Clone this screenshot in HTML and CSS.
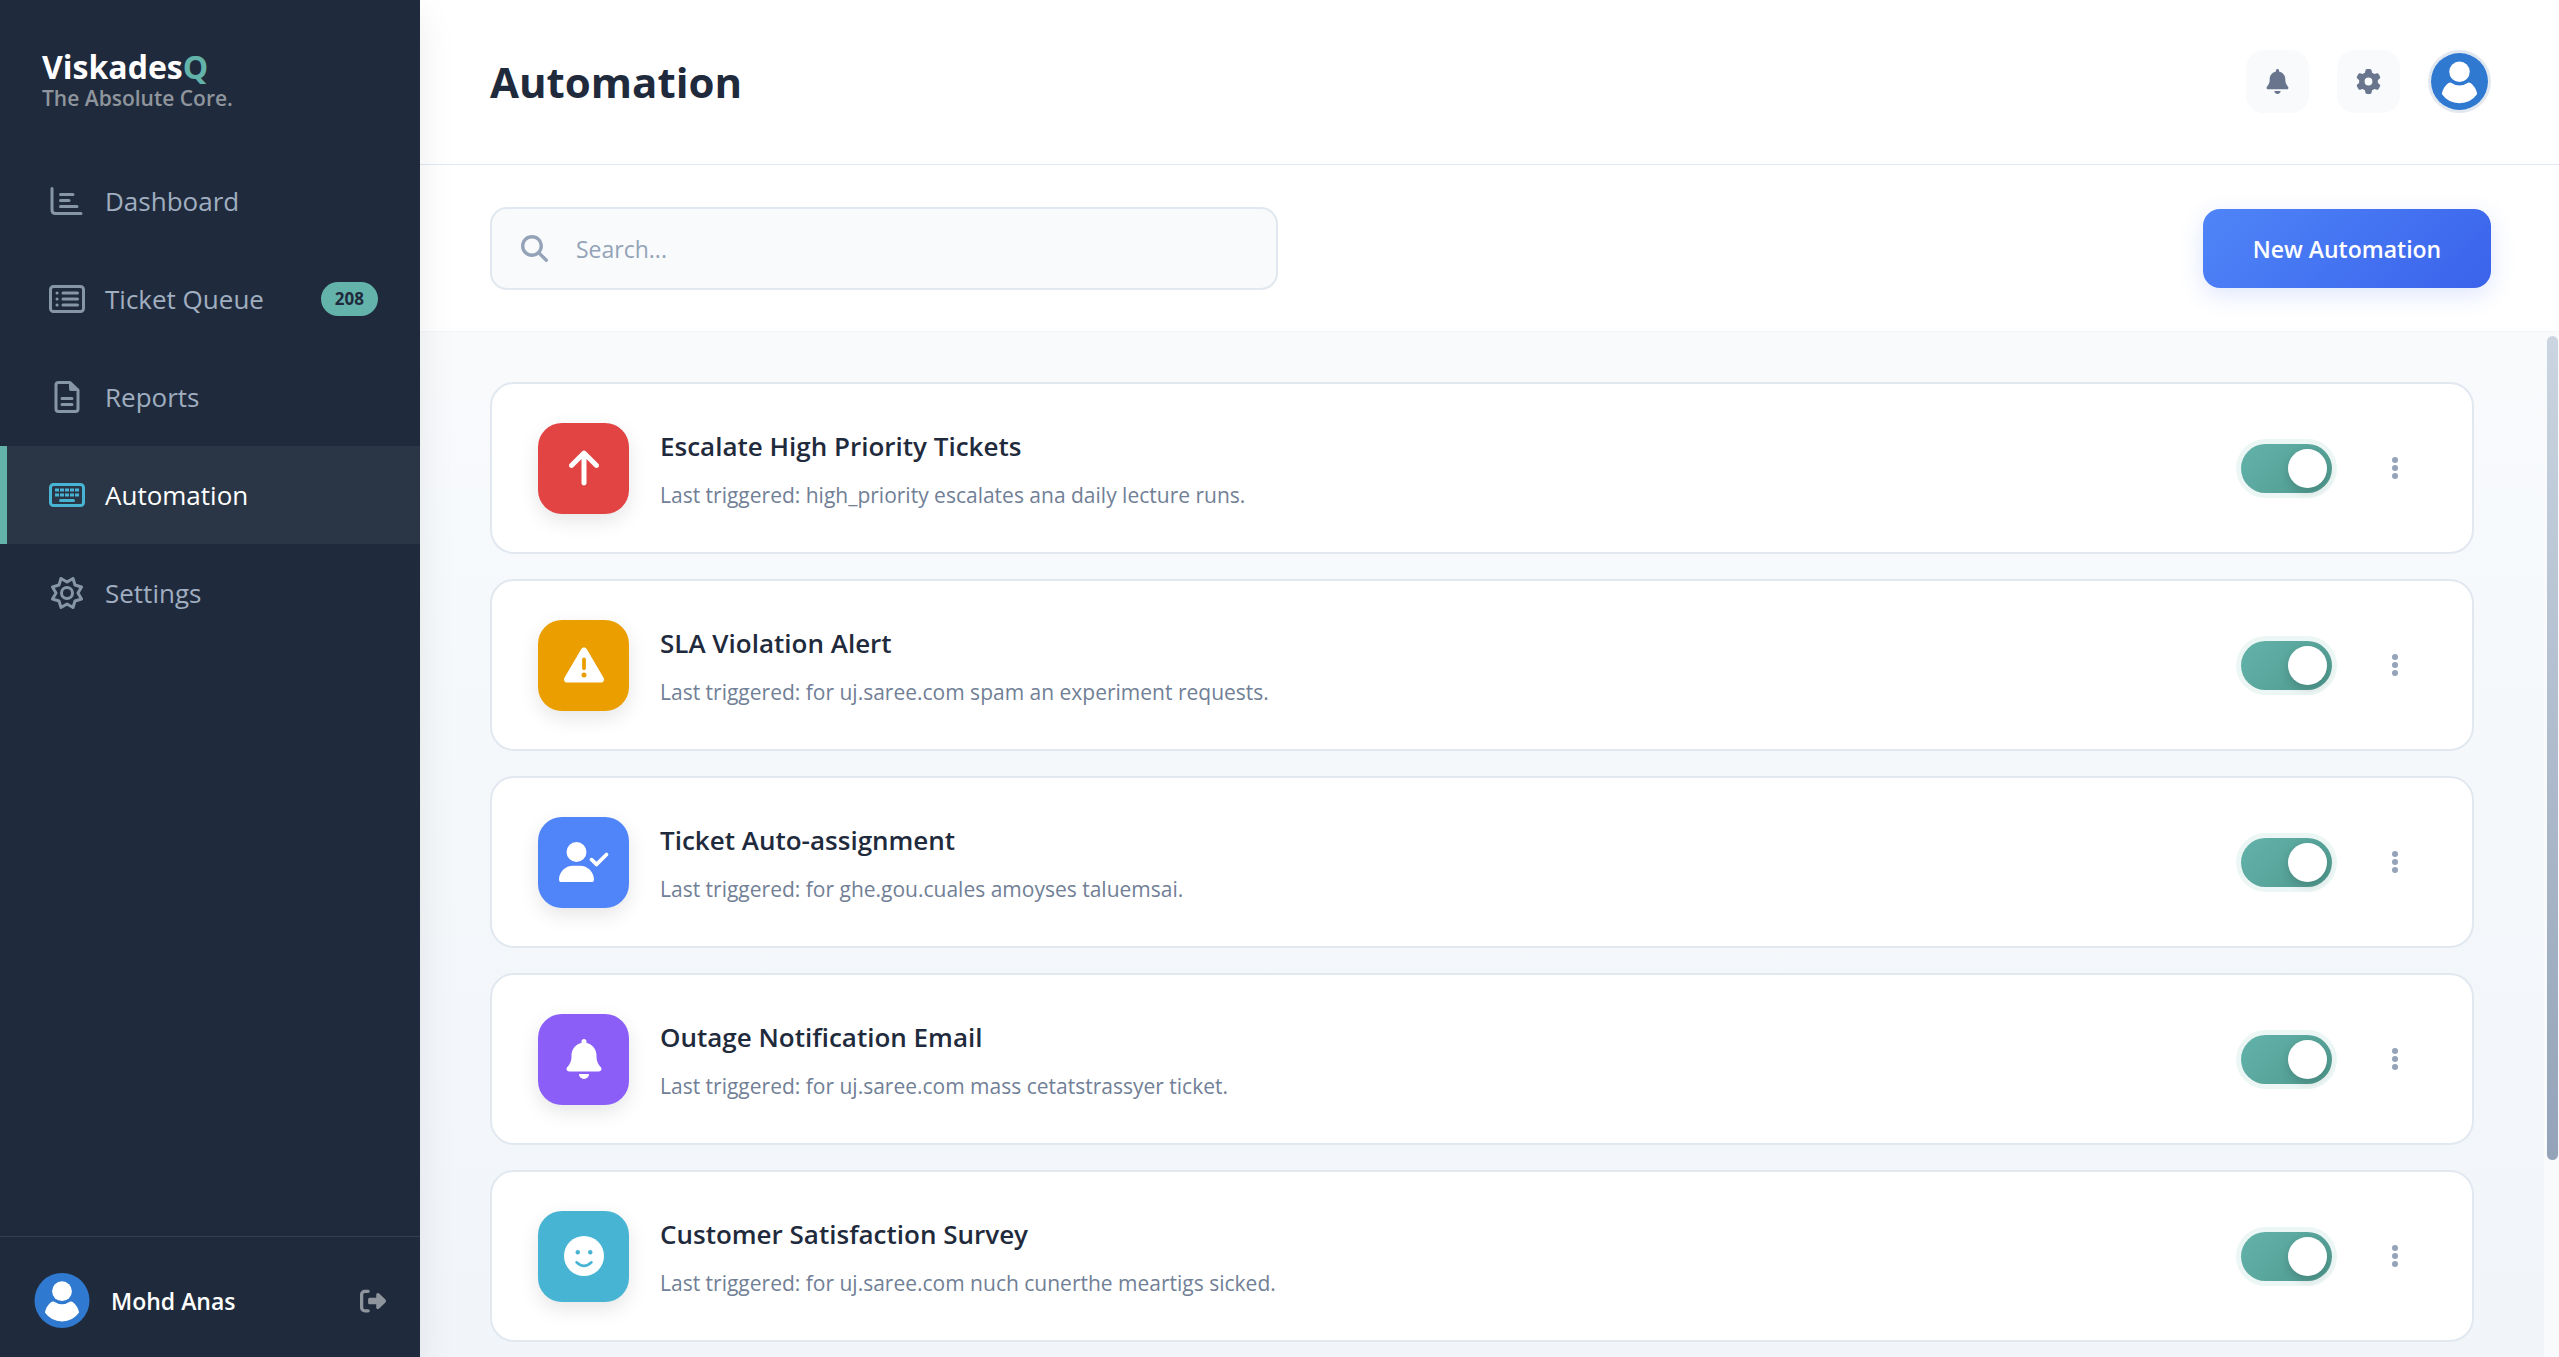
FILE: index.html
```
<!DOCTYPE html>
<html lang="en">
<head>
    <meta charset="UTF-8">
    <meta name="viewport" content="width=device-width, initial-scale=1.0">
    <title>Automation - ViskadesQ</title>
    <link rel="stylesheet" href="styles.css">
</head>
<body>
    <!-- Shared icons -->
    <svg class="sprite" aria-hidden="true">
        <symbol id="icon-bell" viewBox="0 0 448 512">
            <path d="M224 0c-17.7 0-32 14.3-32 32V51.2C119 66 64 130.6 64 208v18.8c0 47-17.3 92.4-48.5 127.6l-7.4 8.3c-8.4 9.4-10.4 22.9-5.3 34.4S19.4 416 32 416H416c12.6 0 24-7.4 29.2-18.9s3.1-25-5.3-34.4l-7.4-8.3C401.3 319.2 384 273.9 384 226.8V208c0-77.4-55-142-128-156.8V32c0-17.7-14.3-32-32-32zm45.3 493.3c12-12 18.7-28.3 18.7-45.3H224 160c0 17 6.7 33.3 18.7 45.3s28.3 18.7 45.3 18.7s33.3-6.7 45.3-18.7z"/>
        </symbol>
        <symbol id="icon-dots" viewBox="0 0 6 22">
            <circle cx="3" cy="3" r="3"/>
            <circle cx="3" cy="11" r="3"/>
            <circle cx="3" cy="19" r="3"/>
        </symbol>
        <symbol id="icon-avatar" viewBox="0 0 100 100">
            <circle cx="50" cy="50" r="50" fill="#3079d0"/>
            <circle cx="50" cy="33" r="18" fill="#fff"/>
            <path fill="#fff" d="M35 52Q50 62 65 52Q67 51 70 53Q79 60 81 72Q70 88 50 88Q30 88 19 72Q21 60 30 53Q33 51 35 52z"/>
        </symbol>
    </svg>

    <div class="app">
        <aside class="sidebar">
            <div class="brand">
                <div class="brand-name">Viskades<span>Q</span></div>
                <div class="brand-tagline">The Absolute Core.</div>
            </div>

            <nav class="nav">
                <a href="#" class="nav-item">
                    <svg class="nav-icon" viewBox="0 0 36 32">
                        <path d="M3 3.5V25q0 3.5 3.5 3.5H32M11.5 9.5h12.5M11.5 15.5h8.5M11.5 21.5h16.5"/>
                    </svg>
                    <span>Dashboard</span>
                </a>
                <a href="#" class="nav-item">
                    <svg class="nav-icon" viewBox="0 0 36 32">
                        <rect x="1.5" y="3.5" width="33" height="25" rx="3"/>
                        <path d="M14 10h14.5M14 16h14.5M14 22h14.5M8 10h.1M8 16h.1M8 22h.1"/>
                    </svg>
                    <span>Ticket Queue</span>
                    <span class="badge">208</span>
                </a>
                <a href="#" class="nav-item">
                    <svg class="nav-icon" viewBox="0 0 36 32">
                        <path d="M21 1.5H9.5q-2.5 0-2.5 2.5v24q0 2.5 2.5 2.5h17q2.5 0 2.5-2.5V9zM13 17.5h10M13 23.5h10"/>
                        <path class="solid" d="M20 1h2l8 8v1h-8q-2 0-2-2z"/>
                    </svg>
                    <span>Reports</span>
                </a>
                <a href="#" class="nav-item active">
                    <svg class="nav-icon" viewBox="0 0 36 32">
                        <rect x="1.5" y="5.5" width="33" height="21" rx="3"/>
                        <path d="M11.5 21.5h13"/>
                        <path class="solid" d="M6 9.5h4v3h-4zM11 9.5h4v3h-4zM16 9.5h4v3h-4zM21 9.5h4v3h-4zM26 9.5h4v3h-4zM6 14.5h4v3h-4zM11 14.5h4v3h-4zM16 14.5h4v3h-4zM21 14.5h4v3h-4zM26 14.5h4v3h-4z"/>
                    </svg>
                    <span>Automation</span>
                </a>
                <a href="#" class="nav-item">
                    <svg class="nav-icon" viewBox="0 0 36 32">
                        <path d="M24 1.5L26 8L32.5 10L29 16L32.5 22L26 24L24 30.5L18 27L12 30.5L10 24L3.5 22L7 16L3.5 10L10 8L12 1.5L18 5z"/>
                        <circle cx="18" cy="16" r="5.5"/>
                    </svg>
                    <span>Settings</span>
                </a>
            </nav>

            <div class="user">
                <svg class="user-avatar"><use href="#icon-avatar"/></svg>
                <span class="user-name">Mohd Anas</span>
                <button class="logout" aria-label="Log out">
                    <svg viewBox="0 0 512 512"><path d="M377.9 105.9L500.7 228.7c7.2 7.2 11.3 17.1 11.3 27.3s-4.1 20.1-11.3 27.3L377.9 406.1c-6.4 6.4-15 9.9-24 9.9c-18.7 0-33.9-15.2-33.9-33.9l0-62.1-128 0c-17.7 0-32-14.3-32-32l0-64c0-17.7 14.3-32 32-32l128 0 0-62.1c0-18.7 15.2-33.9 33.9-33.9c9 0 17.6 3.6 24 9.9zM160 96L96 96c-17.7 0-32 14.3-32 32l0 256c0 17.7 14.3 32 32 32l64 0c17.7 0 32 14.3 32 32s-14.3 32-32 32l-64 0c-53 0-96-43-96-96L0 128C0 75 43 32 96 32l64 0c17.7 0 32 14.3 32 32s-14.3 32-32 32z"/></svg>
                </button>
            </div>
        </aside>

        <main class="main">
            <header class="header">
                <h1>Automation</h1>
                <div class="header-actions">
                    <button class="icon-btn" aria-label="Notifications">
                        <svg><use href="#icon-bell"/></svg>
                    </button>
                    <button class="icon-btn" aria-label="Settings">
                        <svg viewBox="0 0 512 512"><path d="M495.9 166.6c3.2 8.7 .5 18.4-6.4 24.6l-43.3 39.4c1.1 8.3 1.7 16.8 1.7 25.4s-.6 17.1-1.7 25.4l43.3 39.4c6.9 6.2 9.6 15.9 6.4 24.6c-4.4 11.9-9.7 23.3-15.8 34.3l-4.7 8.1c-6.6 11-14 21.4-22.1 31.2c-5.9 7.2-15.7 9.6-24.5 6.8l-55.7-17.7c-13.4 10.3-28.2 18.9-44 25.4l-12.5 57.1c-2 9.1-9 16.3-18.2 17.8c-13.8 2.3-28 3.5-42.5 3.5s-28.7-1.2-42.5-3.5c-9.2-1.5-16.2-8.7-18.2-17.8l-12.5-57.1c-15.8-6.5-30.6-15.1-44-25.4L83.1 425.9c-8.8 2.8-18.6 .3-24.5-6.8c-8.1-9.8-15.5-20.2-22.1-31.2l-4.7-8.1c-6.1-11-11.4-22.4-15.8-34.3c-3.2-8.7-.5-18.4 6.4-24.6l43.3-39.4C64.6 273.1 64 264.6 64 256s.6-17.1 1.7-25.4L22.4 191.2c-6.9-6.2-9.6-15.9-6.4-24.6c4.4-11.9 9.7-23.3 15.8-34.3l4.7-8.1c6.6-11 14-21.4 22.1-31.2c5.9-7.2 15.7-9.6 24.5-6.8l55.7 17.7c13.4-10.3 28.2-18.9 44-25.4l12.5-57.1c2-9.1 9-16.3 18.2-17.8C227.3 1.2 241.5 0 256 0s28.7 1.2 42.5 3.5c9.2 1.5 16.2 8.7 18.2 17.8l12.5 57.1c15.8 6.5 30.6 15.1 44 25.4l55.7-17.7c8.8-2.8 18.6-.3 24.5 6.8c8.1 9.8 15.5 20.2 22.1 31.2l4.7 8.1c6.1 11 11.4 22.4 15.8 34.3zM256 336a80 80 0 1 0 0-160 80 80 0 1 0 0 160z"/></svg>
                    </button>
                    <button class="profile-btn" aria-label="Profile">
                        <svg><use href="#icon-avatar"/></svg>
                    </button>
                </div>
            </header>

            <div class="toolbar">
                <label class="search">
                    <svg viewBox="0 0 512 512"><path d="M416 208c0 45.9-14.9 88.3-40 122.7L502.6 457.4c12.5 12.5 12.5 32.8 0 45.3s-32.8 12.5-45.3 0L330.7 376c-34.4 25.2-76.8 40-122.7 40C93.1 416 0 322.9 0 208S93.1 0 208 0S416 93.1 416 208zM208 352a144 144 0 1 0 0-288 144 144 0 1 0 0 288z"/></svg>
                    <input type="text" placeholder="Search..." aria-label="Search automations">
                </label>
                <button class="new-btn">New Automation</button>
            </div>

            <div class="content">
                <div class="list">
                    <div class="card">
                        <div class="tile red">
                            <svg viewBox="0 0 384 512"><path d="M214.6 41.4c-12.5-12.5-32.8-12.5-45.3 0l-160 160c-12.5 12.5-12.5 32.8 0 45.3s32.8 12.5 45.3 0L160 141.2V448c0 17.7 14.3 32 32 32s32-14.3 32-32V141.2L329.4 246.6c12.5 12.5 32.8 12.5 45.3 0s12.5-32.8 0-45.3l-160-160z"/></svg>
                        </div>
                        <div class="info">
                            <h2>Escalate High Priority Tickets</h2>
                            <p>Last triggered: high_priority escalates ana daily lecture runs.</p>
                        </div>
                        <input type="checkbox" class="toggle" aria-label="Escalate High Priority Tickets" checked>
                        <button class="more" aria-label="More options"><svg><use href="#icon-dots"/></svg></button>
                    </div>

                    <div class="card">
                        <div class="tile orange">
                            <svg viewBox="0 0 512 512"><path d="M256 32c14.2 0 27.3 7.5 34.5 19.8l216 368c7.3 12.4 7.3 27.7 .2 40.1S486.3 480 472 480H40c-14.3 0-27.6-7.7-34.7-20.1s-7-27.8 .2-40.1l216-368C228.7 39.5 241.8 32 256 32zm0 128c-13.3 0-24 10.7-24 24V296c0 13.3 10.7 24 24 24s24-10.7 24-24V184c0-13.3-10.7-24-24-24zm32 224a32 32 0 1 0 -64 0 32 32 0 1 0 64 0z"/></svg>
                        </div>
                        <div class="info">
                            <h2>SLA Violation Alert</h2>
                            <p>Last triggered: for uj.saree.com spam an experiment requests.</p>
                        </div>
                        <input type="checkbox" class="toggle" aria-label="SLA Violation Alert" checked>
                        <button class="more" aria-label="More options"><svg><use href="#icon-dots"/></svg></button>
                    </div>

                    <div class="card">
                        <div class="tile blue">
                            <svg viewBox="0 0 640 512"><path d="M96 128a128 128 0 1 1 256 0A128 128 0 1 1 96 128zM0 482.3C0 383.8 79.8 304 178.3 304h91.4C368.2 304 448 383.8 448 482.3c0 16.4-13.3 29.7-29.7 29.7H29.7C13.3 512 0 498.7 0 482.3zM625 177L497 305c-9.4 9.4-24.6 9.4-33.9 0l-64-64c-9.4-9.4-9.4-24.6 0-33.9s24.6-9.4 33.9 0l47 47L591 143c9.4-9.4 24.6-9.4 33.9 0s9.4 24.6 0 33.9z"/></svg>
                        </div>
                        <div class="info">
                            <h2>Ticket Auto-assignment</h2>
                            <p>Last triggered: for ghe.gou.cuales amoyses taluemsai.</p>
                        </div>
                        <input type="checkbox" class="toggle" aria-label="Ticket Auto-assignment" checked>
                        <button class="more" aria-label="More options"><svg><use href="#icon-dots"/></svg></button>
                    </div>

                    <div class="card">
                        <div class="tile purple">
                            <svg><use href="#icon-bell"/></svg>
                        </div>
                        <div class="info">
                            <h2>Outage Notification Email</h2>
                            <p>Last triggered: for uj.saree.com mass cetatstrassyer ticket.</p>
                        </div>
                        <input type="checkbox" class="toggle" aria-label="Outage Notification Email" checked>
                        <button class="more" aria-label="More options"><svg><use href="#icon-dots"/></svg></button>
                    </div>

                    <div class="card">
                        <div class="tile cyan">
                            <svg viewBox="0 0 512 512">
                                <circle cx="256" cy="256" r="256"/>
                                <g fill="#47b4d4">
                                    <circle cx="176" cy="208" r="28"/>
                                    <circle cx="336" cy="208" r="28"/>
                                </g>
                                <path d="M160 336Q256 428 352 336" fill="none" stroke="#47b4d4" stroke-width="32" stroke-linecap="round"/>
                            </svg>
                        </div>
                        <div class="info">
                            <h2>Customer Satisfaction Survey</h2>
                            <p>Last triggered: for uj.saree.com nuch cunerthe meartigs sicked.</p>
                        </div>
                        <input type="checkbox" class="toggle" aria-label="Customer Satisfaction Survey" checked>
                        <button class="more" aria-label="More options"><svg><use href="#icon-dots"/></svg></button>
                    </div>
                </div>
                <div class="scrollbar" aria-hidden="true"><div class="thumb"></div></div>
            </div>
        </main>
    </div>
</body>
</html>
```
FILE: styles.css
```
* {
    box-sizing: border-box;
    margin: 0;
    padding: 0;
}
body {
    font-family: "Open Sans", "Noto Sans", sans-serif;
    color: #1f2b3c;
    background: #fff;
}
button, input {
    font-family: inherit;
    border: none;
}
button {
    cursor: pointer;
}
.sprite {
    display: none;
}
.app {
    display: flex;
    height: 100vh;
    overflow: hidden;
}

/* Sidebar */
.sidebar {
    display: flex;
    flex-direction: column;
    flex: 0 0 420px;
    background: #1f2b3c;
    box-shadow: 0 14px 35px rgba(0, 0, 0, 0.08);
    z-index: 1;
}
.brand {
    padding: 50px 42px 40px;
}
.brand-name {
    font-size: 32px;
    font-weight: 700;
    line-height: 34px;
    color: #fff;
}
.brand-name span {
    color: #63b3ab;
}
.brand-tagline {
    font-size: 21px;
    font-weight: 600;
    line-height: 28px;
    color: #8f959d;
}
.nav {
    flex: 1;
}
.nav-item {
    display: flex;
    align-items: center;
    gap: 20px;
    height: 98px;
    padding: 0 42px;
    border-left: 7px solid transparent;
    color: #a0aec0;
    font-size: 26px;
    text-decoration: none;
}
.nav-icon {
    width: 36px;
    height: 32px;
    fill: none;
    stroke: #8795a9;
    stroke-width: 3;
    stroke-linecap: round;
    stroke-linejoin: round;
}
.nav-icon .solid {
    fill: #8795a9;
    stroke: none;
}
.nav-item.active {
    background: #2a3646;
    border-left-color: #63b3ab;
    color: #fff;
}
.active .nav-icon {
    stroke: #47b4d4;
}
.active .nav-icon .solid {
    fill: #47b4d4;
}
.badge {
    margin-left: auto;
    padding: 0 14px;
    border-radius: 17px;
    background: #63b3ab;
    color: #1f2b3c;
    font-size: 17px;
    font-weight: 700;
    line-height: 34px;
}
.user {
    display: flex;
    align-items: center;
    gap: 21px;
    padding: 36px 34px 29px;
    border-top: 1px solid #344050;
}
.user-avatar {
    width: 56px;
    height: 55px;
}
.user-name {
    flex: 1;
    color: #fff;
    font-size: 23px;
    font-weight: 600;
}
.logout {
    display: flex;
    background: none;
}
.logout svg {
    width: 26px;
    height: 26px;
    fill: #8f959d;
}

/* Header */
.main {
    display: flex;
    flex-direction: column;
    flex: 1;
    min-width: 0;
}
.header {
    display: flex;
    align-items: center;
    justify-content: space-between;
    padding: 50px 68px 51px 70px;
    border-bottom: 1px solid #e2e8f0;
}
h1 {
    font-size: 42px;
    font-weight: 700;
    line-height: 63px;
}
.header-actions {
    display: flex;
    gap: 28px;
}
.icon-btn {
    display: flex;
    align-items: center;
    justify-content: center;
    width: 63px;
    height: 63px;
    border-radius: 18px;
    background: #f8fafc;
}
.icon-btn svg {
    width: 25px;
    height: 25px;
    fill: #68758c;
}
.profile-btn {
    display: flex;
    width: 63px;
    height: 63px;
    border: 3px solid #e2e8f0;
    border-radius: 50%;
    background: none;
}
.profile-btn svg {
    width: 57px;
    height: 57px;
}

/* Search and new button */
.toolbar {
    display: flex;
    align-items: center;
    justify-content: space-between;
    padding: 42px 68px 41px 70px;
    border-bottom: 1px solid #f1f5f9;
}
.search {
    display: flex;
    align-items: center;
    gap: 28px;
    width: 788px;
    height: 83px;
    padding: 0 29px;
    border: 2px solid #e2e8f0;
    border-radius: 17px;
    background: #f8fafc;
}
.search svg {
    width: 27px;
    height: 27px;
    fill: #94a3b8;
}
.search input {
    flex: 1;
    background: none;
    color: #1f2b3c;
    font-size: 23px;
    outline: none;
}
.search input::placeholder {
    color: #94a3b8;
}
.new-btn {
    width: 288px;
    height: 79px;
    border-radius: 17px;
    background: linear-gradient(135deg, #4f85f8, #3a63eb);
    box-shadow: 0 7px 25px rgba(59, 100, 235, 0.16);
    color: #fff;
    font-size: 23px;
    font-weight: 600;
}

/* Automation list */
.content {
    display: flex;
    flex: 1;
    min-height: 0;
    background: linear-gradient(180deg, #f8fafc, #f1f5f9);
}
.list {
    display: flex;
    flex-direction: column;
    flex: 1;
    gap: 25px;
    padding: 50px 70px;
    overflow: hidden;
}
.card {
    display: flex;
    align-items: center;
    flex-shrink: 0;
    gap: 31px;
    height: 172px;
    padding: 0 46px;
    border: 2px solid #e2e8f0;
    border-radius: 24px;
    background: #fff;
}
.tile {
    display: flex;
    align-items: center;
    justify-content: center;
    width: 91px;
    height: 91px;
    border-radius: 24px;
    box-shadow: 0 7px 20px rgba(0, 0, 0, 0.1);
}
.tile svg {
    width: 50px;
    height: 40px;
    fill: #fff;
}
.red {
    background: #e24343;
}
.orange {
    background: #eb9e00;
}
.blue {
    background: #4f85f8;
}
.purple {
    background: #8b5ff7;
}
.cyan {
    background: #47b4d4;
}
.info {
    flex: 1;
    padding-top: 2px;
}
.info h2 {
    margin-bottom: 11px;
    font-size: 26px;
    font-weight: 600;
    line-height: 40px;
}
.info p {
    color: #718096;
    font-size: 21px;
    line-height: 36px;
}
.toggle {
    appearance: none;
    display: flex;
    align-items: center;
    width: 91px;
    height: 49px;
    padding: 5px;
    border-radius: 25px;
    background: #cbd5e1;
    cursor: pointer;
}
.toggle::before {
    content: "";
    width: 39px;
    height: 39px;
    border-radius: 50%;
    background: #fff;
    box-shadow: 0 4px 10px rgba(0, 0, 0, 0.15);
}
.toggle:checked {
    justify-content: flex-end;
    background: linear-gradient(135deg, #63b3ab, #4f998e);
    box-shadow: 0 0 0 5px rgba(99, 179, 171, 0.12);
}
.more {
    display: flex;
    align-items: center;
    justify-content: center;
    width: 63px;
    height: 63px;
    background: none;
}
.more svg {
    width: 6px;
    height: 22px;
    fill: #94a3b8;
}
.scrollbar {
    flex: 0 0 15px;
    padding: 4px 1px 4px 3px;
    background: #f8fafc;
}
.thumb {
    height: 81%;
    border-radius: 6px;
    background: linear-gradient(180deg, #cbd5e1, #94a3b8);
}
```
